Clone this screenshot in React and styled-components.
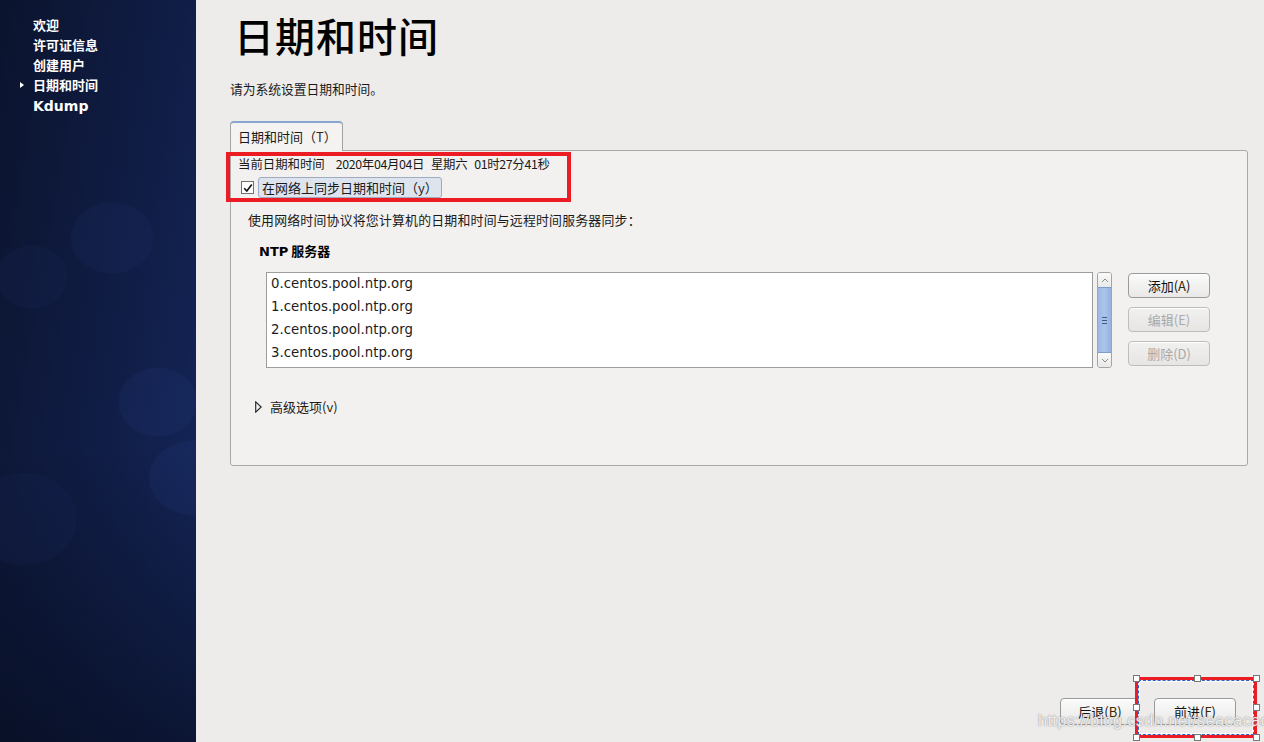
import React from "react";
import styled, { createGlobalStyle } from "styled-components";

const Global = createGlobalStyle`
  html, body { margin: 0; padding: 0; }
  body { width: 1264px; height: 742px; overflow: hidden; background: #edeceb; }
  * { box-sizing: border-box; }
`;

const CJK = `"Noto Sans CJK SC", "DejaVu Sans", sans-serif`;
const LAT = `"DejaVu Sans", "Noto Sans CJK SC", sans-serif`;

const Page = styled.div`
  position: relative;
  display: flex;
  width: 1264px;
  height: 742px;
  overflow: hidden;
  font-family: ${CJK};
  color: #1a1a1a;
`;

const Sidebar = styled.nav`
  width: 196px;
  flex-shrink: 0;
  padding: 15px 0 0 0;
  background:
    radial-gradient(ellipse 42px 36px at 112px 238px, rgba(45,65,140,0.10) 0 96%, transparent 100%),
    radial-gradient(ellipse 36px 32px at 32px 277px, rgba(45,65,140,0.08) 0 96%, transparent 100%),
    radial-gradient(ellipse 40px 35px at 158px 402px, rgba(50,75,160,0.11) 0 96%, transparent 100%),
    radial-gradient(ellipse 46px 38px at 194px 478px, rgba(50,75,160,0.11) 0 96%, transparent 100%),
    radial-gradient(ellipse 54px 47px at 24px 519px, rgba(45,65,140,0.08) 0 96%, transparent 100%),
    linear-gradient(180deg, rgba(0,0,0,0) 60%, rgba(4,8,20,0.55) 100%),
    linear-gradient(100deg, #0b142e 0%, #101d46 55%, #15275c 100%);
`;

const NavItem = styled.div`
  position: relative;
  height: 20px;
  line-height: 20px;
  padding-left: 33px;
  color: #ffffff;
  font-weight: 700;
  font-size: ${p => (p.$latin ? "14px" : "13px")};
  font-family: ${p => (p.$latin ? LAT : CJK)};
  margin-top: ${p => (p.$latin ? "1px" : "0")};
  &::before {
    content: "";
    display: ${p => (p.$active ? "block" : "none")};
    position: absolute;
    left: 20px;
    top: 7px;
    border-left: 4px solid #ffffff;
    border-top: 3px solid transparent;
    border-bottom: 3px solid transparent;
  }
`;

const Main = styled.main`
  flex: 1;
  display: flex;
  flex-direction: column;
  padding: 0 16px 17px 34px;
`;

const Title = styled.h1`
  margin: 11px 0 0 4px;
  font-size: 40px;
  line-height: 48px;
  font-weight: 500;
  color: #000;
  letter-spacing: 1px;
`;

const Subtitle = styled.p`
  margin: 21px 0 0 0;
  font-size: 12.75px;
  line-height: 18px;
`;

const Tab = styled.div`
  position: relative;
  z-index: 1;
  margin-top: 23px;
  margin-bottom: -1px;
  width: 113px;
  height: 30px;
  padding-left: 7px;
  line-height: 28px;
  font-size: 13px;
  background: #f4f3f2;
  border: 1px solid #a3a3a3;
  border-top: 2px solid #88a6cf;
  border-bottom: none;
  border-radius: 4px 4px 0 0;
`;

const Accel = styled.span`
  color: #3a2a00;
`;

const Panel = styled.section`
  width: 1018px;
  height: 316px;
  display: flex;
  flex-direction: column;
  background: #f2f1f0;
  border: 1px solid #a8a8a8;
  border-radius: 0 3px 3px 3px;
`;

const DateLine = styled.div`
  margin-top: 4px;
  padding-left: 7px;
  display: flex;
  gap: 7px;
  font-size: 12.4px;
  line-height: 18px;
  letter-spacing: -0.35px;
  span:first-child { letter-spacing: 0; margin-right: 4px; }
`;

const CheckRow = styled.label`
  margin: 4px 0 0 10px;
  height: 21px;
  display: flex;
  align-items: center;
  gap: 4px;
`;

const CheckBox = styled.span`
  width: 13px;
  height: 13px;
  border: 1px solid #707070;
  background: #fff;
  display: flex;
  align-items: center;
  justify-content: center;
  svg { display: block; }
`;

const CheckLabel = styled.span`
  height: 21px;
  padding: 0 3px;
  line-height: 19px;
  font-size: 13px;
  background: #dee4ee;
  border: 1px solid #9eabc0;
  border-radius: 3px;
`;

const Desc = styled.div`
  margin: 13px 0 0 17px;
  font-size: 12.9px;
  line-height: 18px;
  letter-spacing: 0.2px;
`;

const SectionLabel = styled.div`
  margin: 13px 0 0 28px;
  font-size: 13px;
  line-height: 18px;
  font-weight: 700;
  color: #000;
  b { font-family: ${LAT}; }
`;

const ListRow = styled.div`
  margin: 11px 0 0 35px;
  display: flex;
  align-items: flex-start;
`;

const ListBox = styled.ul`
  margin: 0;
  padding: 0 0 0 4px;
  list-style: none;
  width: 827px;
  height: 96px;
  background: #fff;
  border: 1px solid #9d9d9d;
`;

const ListItem = styled.li`
  height: 23px;
  line-height: 22px;
  font-family: ${LAT};
  font-size: 13.3px;
  color: #1c1c1c;
`;

const Scrollbar = styled.div`
  margin-left: 4px;
  width: 15px;
  height: 96px;
  display: flex;
  flex-direction: column;
  border: 1px solid #a4a4a4;
  border-radius: 3px;
  background: #f3f3f3;
  overflow: hidden;
`;

const ScrollArrow = styled.div`
  height: 14px;
  display: flex;
  align-items: center;
  justify-content: center;
  background: linear-gradient(#fafafa, #e8e8e8);
  svg { display: block; }
`;

const ScrollThumb = styled.div`
  flex: 1;
  display: flex;
  align-items: center;
  justify-content: center;
  background: linear-gradient(90deg, #9cb9e3, #a9c5ec 50%, #94b2de);
  border-top: 1px solid #7e9dc9;
  border-bottom: 1px solid #7e9dc9;
`;

const Grip = styled.div`
  width: 5px;
  height: 7px;
  border-top: 1px solid #3f5a85;
  border-bottom: 1px solid #3f5a85;
  position: relative;
  &::after {
    content: "";
    position: absolute;
    left: 0; right: 0; top: 2px;
    border-top: 1px solid #3f5a85;
  }
`;

const ButtonCol = styled.div`
  margin-left: 16px;
  margin-top: 1px;
  display: flex;
  flex-direction: column;
  gap: 9px;
`;

const Button = styled.button`
  width: ${p => p.$w || 82}px;
  height: ${p => p.$h || 25}px;
  padding: 0;
  font-family: ${CJK};
  font-size: 13px;
  color: ${p => (p.disabled ? "#a9a9a9" : "#111")};
  background: ${p => (p.disabled ? "linear-gradient(#f1f1f0, #e6e5e4)" : "linear-gradient(#fbfbfb, #e9e8e7)")};
  border: 1px solid ${p => (p.disabled ? "#bdbdbd" : "#9a9a9a")};
  border-radius: 4px;
  box-shadow: inset 0 1px 0 #ffffff;
`;

const Advanced = styled.div`
  margin: 30px 0 0 24px;
  display: flex;
  align-items: center;
  gap: 8px;
  font-size: 13px;
  line-height: 18px;
  svg { display: block; }
`;

const BottomBar = styled.div`
  margin-top: auto;
  padding-right: 12px;
  display: flex;
  justify-content: flex-end;
  gap: 14px;
`;

const RedFrame = styled.div`
  position: absolute;
  left: 226px;
  top: 152px;
  width: 345px;
  height: 50px;
  border: 4px solid #ec1c24;
  pointer-events: none;
`;

const SelectFrame = styled.div`
  position: absolute;
  left: 1135px;
  top: 677px;
  width: 122px;
  height: 61px;
  border: 3px solid #ec1c24;
  pointer-events: none;
  &::after {
    content: "";
    position: absolute;
    inset: 0;
    border: 1px dashed #2a62c9;
    outline: 1px solid rgba(255,255,255,0.9);
    outline-offset: -2px;
  }
`;

const Handle = styled.span`
  position: absolute;
  z-index: 2;
  width: 7px;
  height: 7px;
  background: #fff;
  border: 1px solid #777;
  left: ${p => p.$x}px;
  top: ${p => p.$y}px;
`;

const Watermark = styled.div`
  position: absolute;
  left: 1038px;
  top: 711px;
  font-family: "Liberation Sans", Arial, sans-serif;
  font-size: 16.5px;
  line-height: 19px;
  letter-spacing: 0.3px;
  color: rgba(255,255,255,0.85);
  text-shadow: 0 0 1px rgba(120,120,120,0.8), 0 0 2px rgba(150,150,150,0.6);
  white-space: nowrap;
  pointer-events: none;
`;

const servers = [
  "0.centos.pool.ntp.org",
  "1.centos.pool.ntp.org",
  "2.centos.pool.ntp.org",
  "3.centos.pool.ntp.org",
];

const handles = [
  [-5, -5], [56, -5], [115, -5],
  [-5, 24], [115, 24],
  [-5, 54], [56, 54], [115, 54],
];

export default function App() {
  return (
    <Page>
      <Global />
      <Sidebar>
        <NavItem>欢迎</NavItem>
        <NavItem>许可证信息</NavItem>
        <NavItem>创建用户</NavItem>
        <NavItem $active>日期和时间</NavItem>
        <NavItem $latin>Kdump</NavItem>
      </Sidebar>
      <Main>
        <Title>日期和时间</Title>
        <Subtitle>请为系统设置日期和时间。</Subtitle>
        <Tab>日期和时间（<Accel>T</Accel>）</Tab>
        <Panel>
          <DateLine>
            <span>当前日期和时间</span>
            <span>2020年04月04日</span>
            <span>星期六</span>
            <span>01时27分41秒</span>
          </DateLine>
          <CheckRow>
            <CheckBox>
              <svg width="10" height="10" viewBox="0 0 10 10">
                <path d="M1.2 5.2 L3.8 8 L8.8 1.5" fill="none" stroke="#111" strokeWidth="1.6" />
              </svg>
            </CheckBox>
            <CheckLabel>在网络上同步日期和时间（y）</CheckLabel>
          </CheckRow>
          <Desc>使用网络时间协议将您计算机的日期和时间与远程时间服务器同步：</Desc>
          <SectionLabel><b>NTP</b> 服务器</SectionLabel>
          <ListRow>
            <ListBox>
              {servers.map(s => <ListItem key={s}>{s}</ListItem>)}
            </ListBox>
            <Scrollbar>
              <ScrollArrow>
                <svg width="8" height="5" viewBox="0 0 8 5"><path d="M1 4 L4 1 L7 4" fill="none" stroke="#8a8a8a" strokeWidth="1" /></svg>
              </ScrollArrow>
              <ScrollThumb><Grip /></ScrollThumb>
              <ScrollArrow>
                <svg width="8" height="5" viewBox="0 0 8 5"><path d="M1 1 L4 4 L7 1" fill="none" stroke="#8a8a8a" strokeWidth="1" /></svg>
              </ScrollArrow>
            </Scrollbar>
            <ButtonCol>
              <Button>添加(<Accel>A</Accel>)</Button>
              <Button disabled>编辑(E)</Button>
              <Button disabled>删除(D)</Button>
            </ButtonCol>
          </ListRow>
          <Advanced>
            <svg width="7" height="12" viewBox="0 0 7 12"><path d="M0.7 0.8 L6.2 6 L0.7 11.2 Z" fill="none" stroke="#222" strokeWidth="1.1" /></svg>
            <span>高级选项(<Accel>v</Accel>)</span>
          </Advanced>
        </Panel>
        <BottomBar>
          <Button $w={80} $h={27}>后退(<Accel>B</Accel>)</Button>
          <Button $w={82} $h={27}>前进(<Accel>F</Accel>)</Button>
        </BottomBar>
      </Main>
      <RedFrame />
      <SelectFrame>
        {handles.map(([x, y], i) => <Handle key={i} $x={x} $y={y} />)}
      </SelectFrame>
      <Watermark>https://blog.csdn.net/seacacac</Watermark>
    </Page>
  );
}
